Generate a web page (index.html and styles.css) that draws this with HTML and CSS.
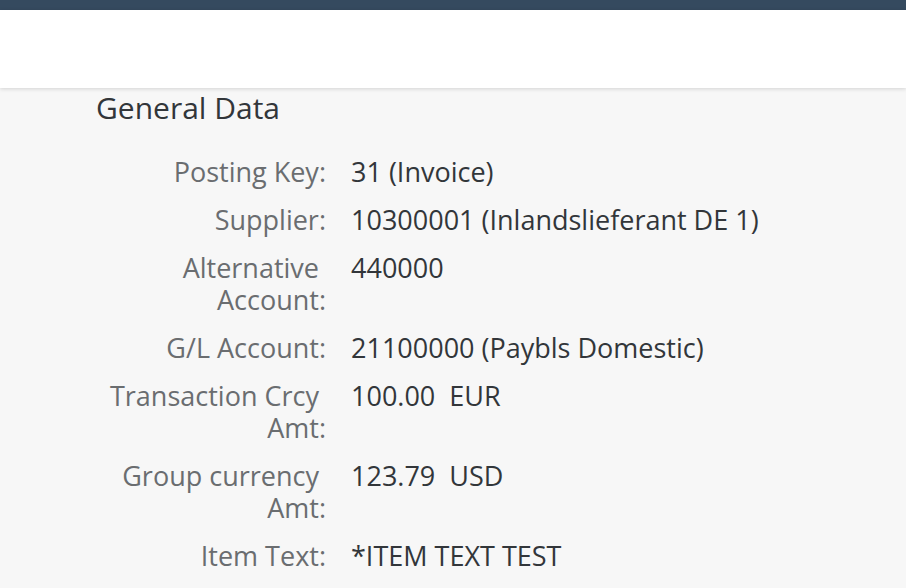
FILE: index.html
```html
<!DOCTYPE html>
<html>
<head>
<meta charset="utf-8">
<link rel="stylesheet" href="styles.css">
</head>
<body>
<div class="shell-bar"></div>
<div class="header"></div>
<main class="content">
  <h2 class="section-title">General Data</h2>
  <div class="form">
    <div class="label">Posting Key:</div>
    <div class="value">31 (Invoice)</div>
    <div class="label">Supplier:</div>
    <div class="value">10300001 (Inlandslieferant DE 1)</div>
    <div class="label">Alternative&nbsp;<br>Account:</div>
    <div class="value">440000</div>
    <div class="label">G/L Account:</div>
    <div class="value">21100000 (Paybls Domestic)</div>
    <div class="label">Transaction Crcy&nbsp;<br>Amt:</div>
    <div class="value">100.00&nbsp; EUR</div>
    <div class="label">Group currency&nbsp;<br>Amt:</div>
    <div class="value">123.79&nbsp; USD</div>
    <div class="label">Item Text:</div>
    <div class="value">*ITEM TEXT TEST</div>
  </div>
</main>
</body>
</html>
```
FILE: styles.css
```css
html, body {
  margin: 0;
  padding: 0;
}
body {
  background: #f7f7f7;
  font-family: "Open Sans", "Noto Sans", sans-serif;
  color: #32363a;
  overflow: hidden;
  height: 588px;
}
.shell-bar {
  height: 10px;
  background: #354a5f;
}
.header {
  height: 78px;
  background: #ffffff;
  box-shadow: 0 1px 4px rgba(0, 0, 0, 0.15);
  position: relative;
  z-index: 1;
}
.content {
  padding: 3px 0 0 96px;
}
.section-title {
  margin: 0;
  font-weight: 400;
  font-size: 30px;
  line-height: 34px;
  color: #32363a;
}
.form {
  margin-top: 31px;
  display: grid;
  grid-template-columns: 230px auto;
  column-gap: 25px;
  row-gap: 16px;
  font-size: 27px;
  line-height: 32px;
}
.label {
  text-align: right;
  color: #6a6d70;
}
.value {
  color: #32363a;
}
```
